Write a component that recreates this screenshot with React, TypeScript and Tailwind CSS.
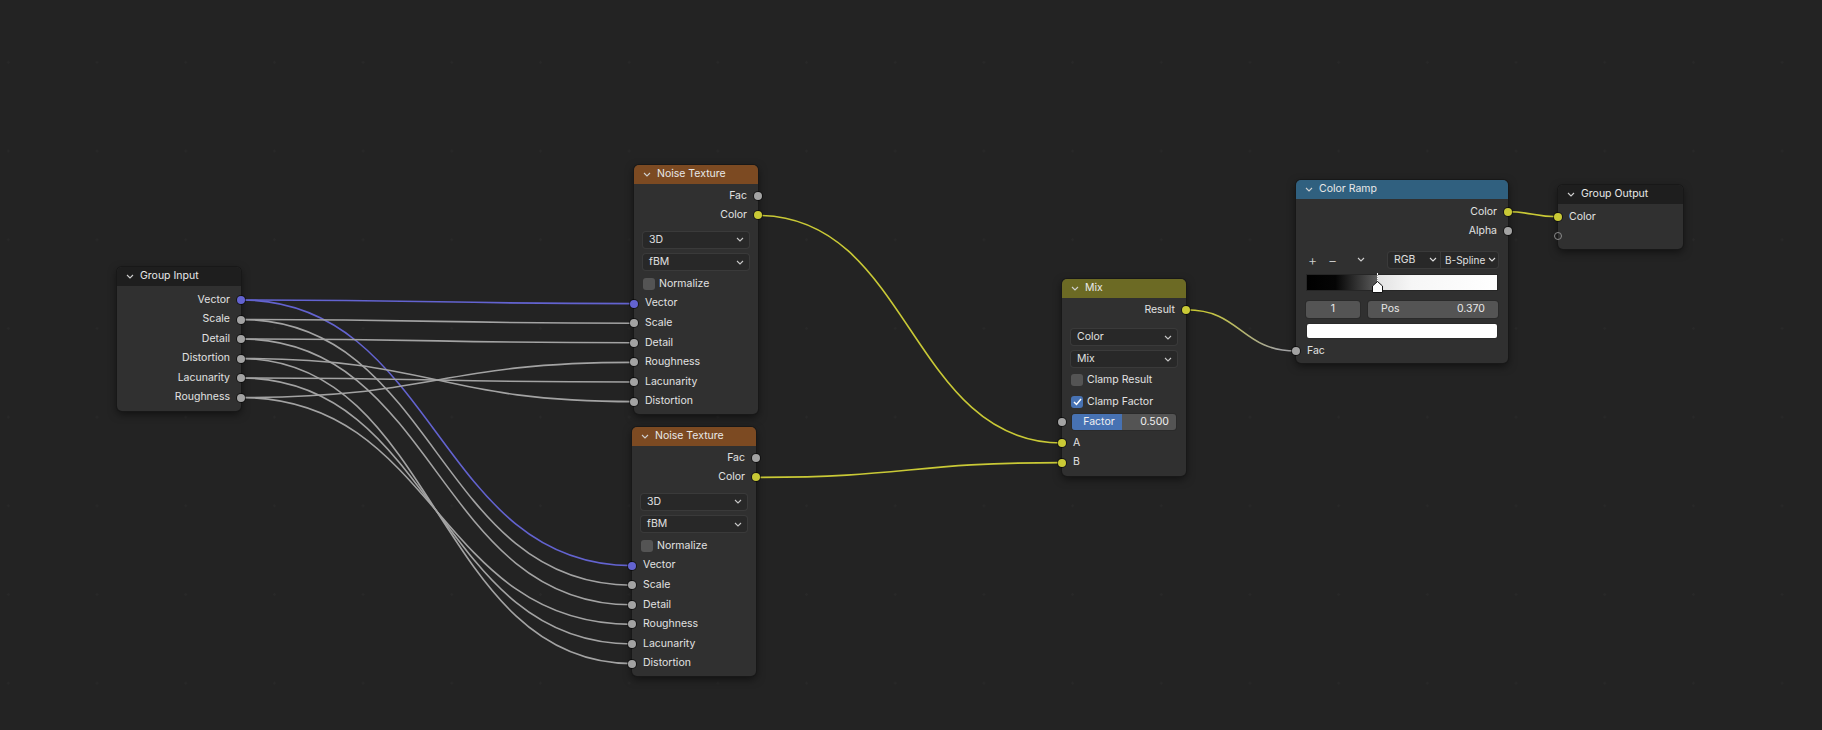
import { ReactNode } from "react";

const GRAY = "#a3a3a3";
const BLUE = "#6363d0";
const YELLOW = "#c9c936";

type SockKind = "gray" | "blue" | "yellow" | "empty";

function Socket({ kind, side }: { kind: SockKind; side: "l" | "r" }) {
  const pos = side === "l" ? "left-[-4px]" : "right-[-4px]";
  const fill =
    kind === "blue"
      ? "bg-[#6363d0]"
      : kind === "yellow"
        ? "bg-[#c9c936]"
        : kind === "empty"
          ? "bg-transparent border border-[#8a8a8a]"
          : "bg-[#a3a3a3]";
  return (
    <span
      className={`absolute top-1/2 -translate-y-1/2 w-[8px] h-[8px] rounded-full ${pos} ${fill} ${
        kind === "empty" ? "" : "shadow-[0_0_0_1px_rgba(0,0,0,0.55)]"
      }`}
    />
  );
}

function Chevron({ className = "" }: { className?: string }) {
  return (
    <svg width="8" height="5" viewBox="0 0 8 5" className={`shrink-0 ${className}`}>
      <polyline points="1,1 4,4 7,1" fill="none" stroke="currentColor" strokeWidth="1.1" />
    </svg>
  );
}

function Node({
  className,
  title,
  head,
  children,
}: {
  className: string;
  title: string;
  head: string;
  children: ReactNode;
}) {
  return (
    <div
      className={`absolute rounded-[5px] bg-[#303030] shadow-[0_0_0_1px_#181818,0_3px_8px_rgba(0,0,0,0.55)] ${className}`}
    >
      <div className={`h-[19px] rounded-t-[5px] flex items-center pl-[9px] gap-[6px] text-[#e8e8e8] ${head}`}>
        <Chevron className="text-[#d0d0d0]" />
        <span>{title}</span>
      </div>
      {children}
    </div>
  );
}

function Out({ label, kind = "gray" }: { label: string; kind?: SockKind }) {
  return (
    <div className="relative h-[19.6px] flex items-center justify-end pr-[11px]">
      {label}
      <Socket kind={kind} side="r" />
    </div>
  );
}

function In({ label, kind = "gray" }: { label: string; kind?: SockKind }) {
  return (
    <div className="relative h-[19.6px] flex items-center pl-[11px]">
      {label}
      <Socket kind={kind} side="l" />
    </div>
  );
}

function Drop({ label, className = "" }: { label: string; className?: string }) {
  return (
    <div
      className={`mx-[9px] h-[16px] rounded-[3px] bg-[#282828] shadow-[0_0_0_1px_#3a3a3a] flex items-center justify-between pl-[6px] pr-[5px] text-[#e0e0e0] ${className}`}
    >
      <span>{label}</span>
      <Chevron className="text-[#c8c8c8]" />
    </div>
  );
}

function Check({ label, on = false, className = "" }: { label: string; on?: boolean; className?: string }) {
  return (
    <div className={`flex items-center gap-[4px] pl-[9px] ${className}`}>
      <span
        className={`w-[12px] h-[12px] rounded-[3px] flex items-center justify-center ${
          on ? "bg-[#4772b3]" : "bg-[#545454]"
        }`}
      >
        {on && (
          <svg width="9" height="8" viewBox="0 0 9 8">
            <polyline points="1,4 3.5,6.5 8,1" fill="none" stroke="#fff" strokeWidth="1.5" />
          </svg>
        )}
      </span>
      <span>{label}</span>
    </div>
  );
}

function NoiseNode({ className }: { className: string }) {
  return (
    <Node className={className} title="Noise Texture" head="bg-[#7c4a22]">
      <div className="pt-[2px] pb-[2.6px]">
        <Out label="Fac" />
        <Out label="Color" kind="yellow" />
        <Drop label="3D" className="mt-[6.8px]" />
        <Drop label="fBM" className="mt-[6.5px]" />
        <div className="mt-[3.7px] h-[19.6px] flex items-center">
          <Check label="Normalize" />
        </div>
        <In label="Vector" kind="blue" />
        <In label="Scale" />
        <In label="Detail" />
        <In label="Roughness" />
        <In label="Lacunarity" />
        <In label="Distortion" />
      </div>
    </Node>
  );
}

function wire(x1: number, y1: number, x2: number, y2: number) {
  const h = Math.abs(x2 - x1) * 0.5;
  return `M${x1} ${y1} C${x1 + h} ${y1}, ${x2 - h} ${y2}, ${x2} ${y2}`;
}

const GI_X = 241;
const GI = [300, 319.5, 339, 358.5, 378, 397.5];
const N1 = [303.6, 323.2, 342.8, 362.4, 382, 401.6];
const N2 = [565.6, 585.2, 604.8, 624.4, 644, 663.6];
// group input order: Vector, Scale, Detail, Distortion, Lacunarity, Roughness
// noise order: Vector, Scale, Detail, Roughness, Lacunarity, Distortion
const MAP = [0, 1, 2, 5, 4, 3];

function Wires() {
  return (
    <svg className="absolute inset-0" width="1822" height="730">
      <defs>
        <linearGradient id="mixfac" gradientUnits="userSpaceOnUse" x1="1186" y1="0" x2="1296" y2="0">
          <stop offset="0.15" stopColor={YELLOW} />
          <stop offset="0.85" stopColor={GRAY} />
        </linearGradient>
      </defs>
      <g fill="none" strokeWidth="1.6" strokeLinecap="round">
        {GI.map((y, i) => (
          <g key={i} stroke={i === 0 ? BLUE : GRAY}>
            <path d={wire(GI_X, y, 634, N1[MAP[i]])} />
            <path d={wire(GI_X, y, 632, N2[MAP[i]])} />
          </g>
        ))}
        <path d={wire(758, 215.4, 1062, 443)} stroke={YELLOW} />
        <path d={wire(756, 477.4, 1062, 462.6)} stroke={YELLOW} />
        <path d={wire(1186, 309.8, 1296, 351)} stroke="url(#mixfac)" />
        <path d={wire(1508, 211.8, 1558, 216.8)} stroke={YELLOW} />
      </g>
    </svg>
  );
}

export default function App() {
  return (
    <div className="relative w-[1822px] h-[730px] overflow-hidden bg-[#232323] bg-[radial-gradient(circle,#282828_1px,transparent_1.5px)] bg-[length:88.7px_88.7px] bg-[position:-36px_18px] font-['Inter',sans-serif] text-[10.5px] leading-none text-[#e2e2e2] select-none">
      <Wires />

      {/* Group Input */}
      <Node className="left-[117px] top-[267px] w-[124px]" title="Group Input" head="bg-[#1e1e1e]">
        <div className="pt-[4.25px] pb-[3.75px]">
          {["Vector", "Scale", "Detail", "Distortion", "Lacunarity", "Roughness"].map((l, i) => (
            <div key={l} className="relative h-[19.5px] flex items-center justify-end pr-[11px]">
              {l}
              <Socket kind={i === 0 ? "blue" : "gray"} side="r" />
            </div>
          ))}
        </div>
      </Node>

      <NoiseNode className="left-[634px] top-[165px] w-[124px]" />
      <NoiseNode className="left-[632px] top-[427px] w-[124px]" />

      {/* Mix */}
      <Node className="left-[1062px] top-[279px] w-[124px]" title="Mix" head="bg-[#6c6a24]">
        <div className="pt-[2px] pb-[3.6px]">
          <Out label="Result" kind="yellow" />
          <Drop label="Color" className="mt-[9.7px]" />
          <Drop label="Mix" className="mt-[6px]" />
          <div className="mt-[1.7px] h-[22px] flex items-center">
            <Check label="Clamp Result" />
          </div>
          <div className="h-[22px] flex items-center">
            <Check label="Clamp Factor" on />
          </div>
          <div className="relative mt-[1px] h-[16px]">
            <Socket kind="gray" side="l" />
            <div className="mx-[10px] h-full rounded-[3px] bg-[#545454] shadow-[0_0_0_1px_#2a2a2a] flex overflow-hidden">
              <div className="w-[50px] bg-[#4772b3] flex items-center justify-center pl-[4px] text-[#f0f0f0]">
                Factor
              </div>
              <div className="flex-1 flex items-center justify-end pr-[7px] text-[#f0f0f0]">0.500</div>
            </div>
          </div>
          <div className="mt-[3.2px]">
            <In label="A" kind="yellow" />
            <In label="B" kind="yellow" />
          </div>
        </div>
      </Node>

      {/* Color Ramp */}
      <Node className="left-[1296px] top-[180px] w-[212px]" title="Color Ramp" head="bg-[#30607f]">
        <div className="pt-[3px] pb-[2.2px]">
          <Out label="Color" kind="yellow" />
          <Out label="Alpha" />
          <div className="mt-[10.8px] h-[16px] flex items-center pl-[12px] pr-[10px] text-[#cfcfcf]">
            <span className="w-[20px] text-[14px] font-light">+</span>
            <span className="w-[29px] text-[14px] font-light">−</span>
            <Chevron className="text-[#cfcfcf]" />
            <div className="ml-auto flex h-full w-[110px] rounded-[3px] bg-[#282828] shadow-[0_0_0_1px_#3a3a3a] text-[#e0e0e0]">
              <div className="w-[53px] flex items-center justify-between pl-[6px] pr-[3px] border-r border-[#3a3a3a]">
                <span>RGB</span>
                <Chevron />
              </div>
              <div className="flex-1 min-w-0 flex items-center justify-between pl-[4px] pr-[2px] text-[10px] whitespace-nowrap">
                <span>B-Spline</span>
                <Chevron />
              </div>
            </div>
          </div>
          <div className="relative mt-[7px] mx-[11px] h-[15px] shadow-[0_0_0_1px_#262626] bg-[linear-gradient(to_right,#000_0%,#050505_15%,#5c5c5c_37%,#e2e2e2_37.2%,#f6f6f6_55%,#fff_100%)]">
            <div className="absolute left-[70px] top-[-2px] h-[10px] border-l border-dotted border-white" />
            <div className="absolute left-[65px] top-[6px] flex flex-col items-center">
              <svg width="11" height="12" viewBox="0 0 11 12">
                <path d="M5.5 0.5 L10.5 5 L10.5 11.5 L0.5 11.5 L0.5 5 Z" fill="#fff" stroke="#111" strokeWidth="1" />
              </svg>
            </div>
          </div>
          <div className="mt-[11px] mx-[10px] h-[17px] flex gap-[8px] text-[#e8e8e8]">
            <div className="w-[54px] rounded-[3px] bg-[#545454] shadow-[0_0_0_1px_#2a2a2a] flex items-center justify-center">1</div>
            <div className="flex-1 rounded-[3px] bg-[#545454] shadow-[0_0_0_1px_#2a2a2a] flex items-center justify-between px-[13px]">
              <span>Pos</span>
              <span>0.370</span>
            </div>
          </div>
          <div className="mt-[6px] mx-[11px] h-[14px] rounded-[2px] bg-white shadow-[0_0_0_1px_#2a2a2a]" />
          <div className="mt-[3.2px]">
            <In label="Fac" />
          </div>
        </div>
      </Node>

      {/* Group Output */}
      <Node className="left-[1558px] top-[185px] w-[125px]" title="Group Output" head="bg-[#1e1e1e]">
        <div className="pt-[3px] pb-[2.8px]">
          <In label="Color" kind="yellow" />
          <div className="relative h-[19.6px]">
            <Socket kind="empty" side="l" />
          </div>
        </div>
      </Node>
    </div>
  );
}
